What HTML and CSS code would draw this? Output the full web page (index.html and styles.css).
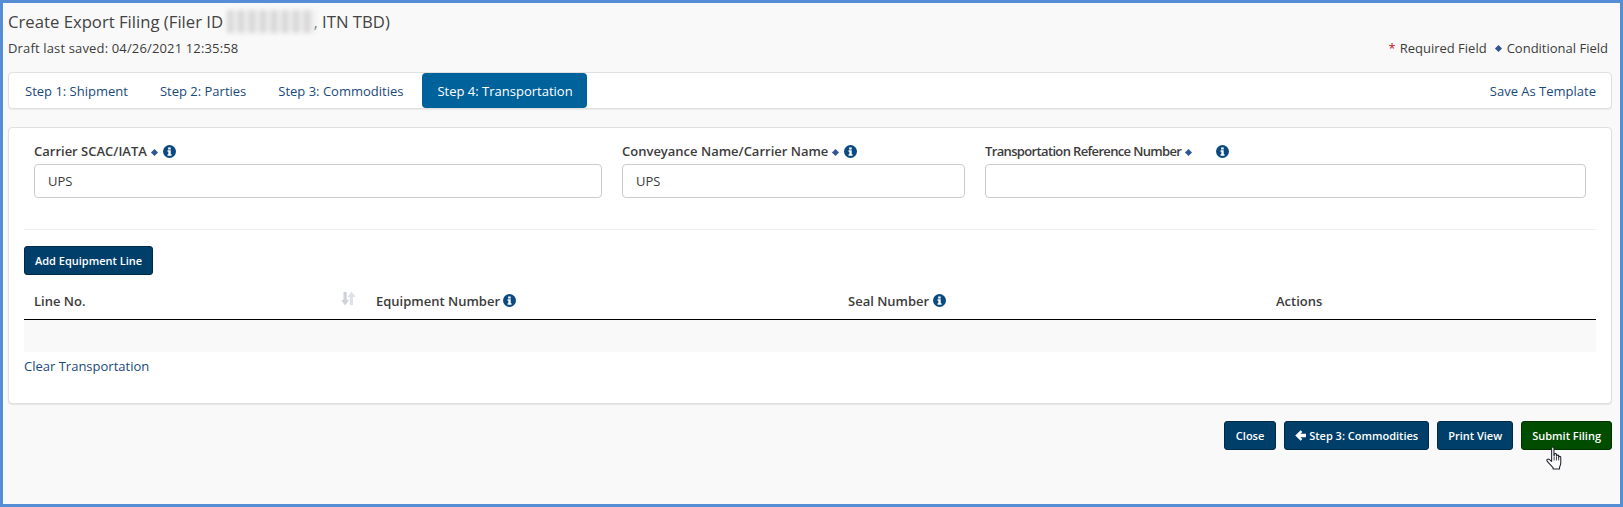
FILE: index.html
```html
<!DOCTYPE html>
<html lang="en">
<head>
<meta charset="UTF-8">
<meta name="viewport" content="width=device-width, initial-scale=1.0">
<title>Create Export Filing</title>
<link rel="stylesheet" href="styles.css">
</head>
<body>
<div class="frame">
  <h1 class="title">Create Export Filing (Filer ID <span class="blurred"></span>, ITN TBD)</h1>
  <div class="status-row">
    <span class="saved">Draft last saved: 04/26/2021 12:35:58</span>
    <span class="legend">
      <span class="req">*</span> Required Field
      <span class="diamond legend-diamond"></span> Conditional Field
    </span>
  </div>

  <nav class="tabs">
    <a class="tab" href="#">Step 1: Shipment</a>
    <a class="tab" href="#">Step 2: Parties</a>
    <a class="tab" href="#">Step 3: Commodities</a>
    <a class="tab active" href="#">Step 4: Transportation</a>
    <a class="tab-right" href="#">Save As Template</a>
  </nav>

  <section class="card">
    <div class="fields">
      <div class="field">
        <label>Carrier SCAC/IATA <span class="diamond"></span>
          <svg class="info" viewBox="0 0 16 16"><use href="#info-icon"/></svg></label>
        <input type="text" value="UPS">
      </div>
      <div class="field">
        <label>Conveyance Name/Carrier Name <span class="diamond"></span>
          <svg class="info" viewBox="0 0 16 16"><use href="#info-icon"/></svg></label>
        <input type="text" value="UPS">
      </div>
      <div class="field">
        <label class="label-tight">Transportation Reference Number <span class="diamond"></span>
          <svg class="info info-far" viewBox="0 0 16 16"><use href="#info-icon"/></svg></label>
        <input type="text">
      </div>
    </div>

    <hr class="divider">

    <button class="btn">Add Equipment Line</button>

    <table class="lines">
      <thead>
        <tr>
          <th class="col-line">
            <div class="th-sort">Line No.
              <svg class="sort" viewBox="0 0 15 15">
                <path d="M2.500 1h3.200v8h2.300L4.100 14.500 0.200 9h2.300z" fill="#cfd3d8"/>
                <path d="M12 14H8.800V6H6.500L10.400 0.500 14.800 6H12z" fill="#dde2e8"/>
              </svg>
            </div>
          </th>
          <th class="col-equip">Equipment Number <svg class="info" viewBox="0 0 16 16"><use href="#info-icon"/></svg></th>
          <th class="col-seal">Seal Number <svg class="info" viewBox="0 0 16 16"><use href="#info-icon"/></svg></th>
          <th>Actions</th>
        </tr>
      </thead>
      <tbody>
        <tr><td colspan="4"></td></tr>
      </tbody>
    </table>

    <a class="clear-link" href="#">Clear Transportation</a>
  </section>

  <div class="actions">
    <button class="btn btn-close">Close</button>
    <button class="btn"><svg class="arrow" viewBox="0 0 12 12"><path d="M6.200 0.300 8 2.100 5.900 4.200H12V7.800H5.900L8 9.900 6.200 11.700 0.300 6z" fill="#fff"/></svg> Step 3: Commodities</button>
    <button class="btn">Print View</button>
    <button class="btn btn-green">Submit Filing</button>
    <svg class="cursor" viewBox="0 0 20 26">
      <path d="M6.500 2c0-1.400 2.400-1.400 2.400 0v8l.3 0V8.800c0-1.300 2.300-1.300 2.300 0v1.600c0-1.200 2.300-1.200 2.300 0v1.200c0-1.100 2.200-1.100 2.200 0.200v5.700c0 2-.6 3-1.300 4.500v2H8v-1.500C6.500 21 4.500 18.800 2 16c-1.300-1.500 .3-3.200 2-2l2.500 2z" fill="#fff" stroke="#23232e" stroke-width="1.100" stroke-linejoin="round"/>
      <path d="M9.100 11v4M11.500 11v4M13.800 11v4" stroke="#23232e" stroke-width=".9" fill="none"/>
    </svg>
  </div>
</div>

<svg width="0" height="0" class="defs">
  <symbol id="info-icon" viewBox="0 0 16 16">
    <circle cx="8" cy="8" r="8" fill="#0b4a80"/>
    <path d="M6.300 3h3.200v2.500H6.300zM5.600 6.500h3.900v5h1v1.700H5.600v-1.700h1v-3.300h-1z" fill="#fff"/>
  </symbol>
</svg>
</body>
</html>
```

FILE: styles.css
```css
* {
    box-sizing: border-box;
}
html, body {
    margin: 0;
    height: 100%;
}
body {
    font-family: "Open Sans", "Noto Sans", sans-serif;
    font-size: 13px;
    color: #3c3c3c;
    background: #f9f9f9;
    overflow: hidden;
}
.frame {
    height: 507px;
    border: 3px solid #558ed5;
    padding: 0 8px 0 5px;
    background: #f9f9f9;
}
.defs {
    position: absolute;
}

/* header */
.title {
    font-size: 16.700px;
    font-weight: 400;
    margin: 0;
    height: 34px;
    padding-top: 2px;
    display: flex;
    align-items: center;
    white-space: pre;
    color: #444;
}
.blurred {
    display: inline-block;
    width: 88px;
    height: 23px;
    margin-right: -2px;
    background: repeating-linear-gradient(90deg, #d8d8d8 0 6px, #ececec 6px 11px);
    filter: blur(2px);
}
.status-row {
    display: flex;
    justify-content: space-between;
    align-items: center;
    height: 22px;
    padding-right: 4px;
}
.saved {
    letter-spacing: 0.150px;
}
.legend {
    display: flex;
    align-items: center;
    gap: 4px;
}
.req {
    color: #c8102e;
}
.diamond {
    display: inline-block;
    width: 5px;
    height: 5px;
    margin: 2px 2px 0;
    background: #2f5597;
    transform: rotate(45deg);
}
.legend-diamond {
    margin-left: 5px;
    margin-top: 0;
}

/* tabs */
.tabs {
    display: flex;
    align-items: stretch;
    height: 37px;
    margin-top: 13px;
    background: #fff;
    border: 1px solid #e0e0e0;
    border-radius: 4px;
    box-shadow: 0 1px 1px rgba(0, 0, 0, 0.06);
}
.tab {
    display: flex;
    align-items: center;
    padding: 0 16px;
    color: #1a4a7a;
    text-decoration: none;
}
.tab.active {
    margin-left: 3px;
    padding: 0 14px 0 15px;
    background: #00629b;
    color: #fff;
    font-weight: 500;
    border-radius: 4px;
}
.tab-right {
    margin-left: auto;
    align-self: center;
    padding-right: 15px;
    color: #1a4a7a;
    text-decoration: none;
}

/* main card */
.card {
    height: 277px;
    margin-top: 18px;
    padding: 0 15px;
    background: #fff;
    border: 1px solid #e0e0e0;
    border-radius: 4px;
    box-shadow: 0 1px 1px rgba(0, 0, 0, 0.08);
}
.fields {
    display: grid;
    grid-template-columns: 568px 343px 601px;
    gap: 20px;
    padding: 12px 0 0 10px;
}
.field label {
    display: flex;
    align-items: center;
    gap: 3px;
    height: 24px;
    padding-bottom: 2px;
    font-weight: 600;
}
.field .label-tight {
    letter-spacing: -0.650px;
}
.field input {
    display: block;
    width: 100%;
    height: 34px;
    padding: 0 13px;
    font: inherit;
    color: #3c3c3c;
    background: #fff;
    border: 1px solid #ccc;
    border-radius: 4px;
}
.info {
    width: 13px;
    height: 13px;
    vertical-align: -1px;
}
.field .info {
    margin-left: 1px;
}
.field .info-far {
    margin-left: 20px;
}
.divider {
    border: 0;
    border-top: 1px solid #eee;
    margin: 31px 0 16px;
}
.btn {
    height: 29px;
    padding: 0 10px;
    font-family: inherit;
    font-size: 11px;
    font-weight: 600;
    color: #fff;
    background: #003f69;
    border: 1px solid #002b47;
    border-radius: 3px;
}
.btn-close {
    padding: 0 11px;
}
.btn-green {
    background: #004d00;
    border-color: #003300;
}
.arrow {
    width: 11px;
    height: 11px;
    vertical-align: -1px;
}

/* equipment table */
.lines {
    width: 100%;
    margin-top: 9px;
    border-collapse: collapse;
    table-layout: fixed;
}
.lines th {
    height: 35px;
    padding: 0 10px;
    text-align: left;
    font-weight: 600;
    border-bottom: 1px solid #000;
}
.lines td {
    height: 33px;
    background: #f9f9f9;
}
.col-line {
    width: 342px;
}
.col-equip {
    width: 472px;
}
.col-seal {
    width: 428px;
}
.th-sort {
    display: flex;
    align-items: center;
    justify-content: space-between;
}
.sort {
    width: 15px;
    height: 15px;
    margin: -5px 0 0;
}
.clear-link {
    display: block;
    margin-top: 5px;
    color: #1a4a7a;
    text-decoration: none;
}

/* bottom buttons */
.actions {
    position: relative;
    display: flex;
    justify-content: flex-end;
    gap: 8px;
    margin-top: 17px;
}
.cursor {
    position: absolute;
    right: 47px;
    top: 25px;
    width: 20px;
    height: 25px;
}
```
